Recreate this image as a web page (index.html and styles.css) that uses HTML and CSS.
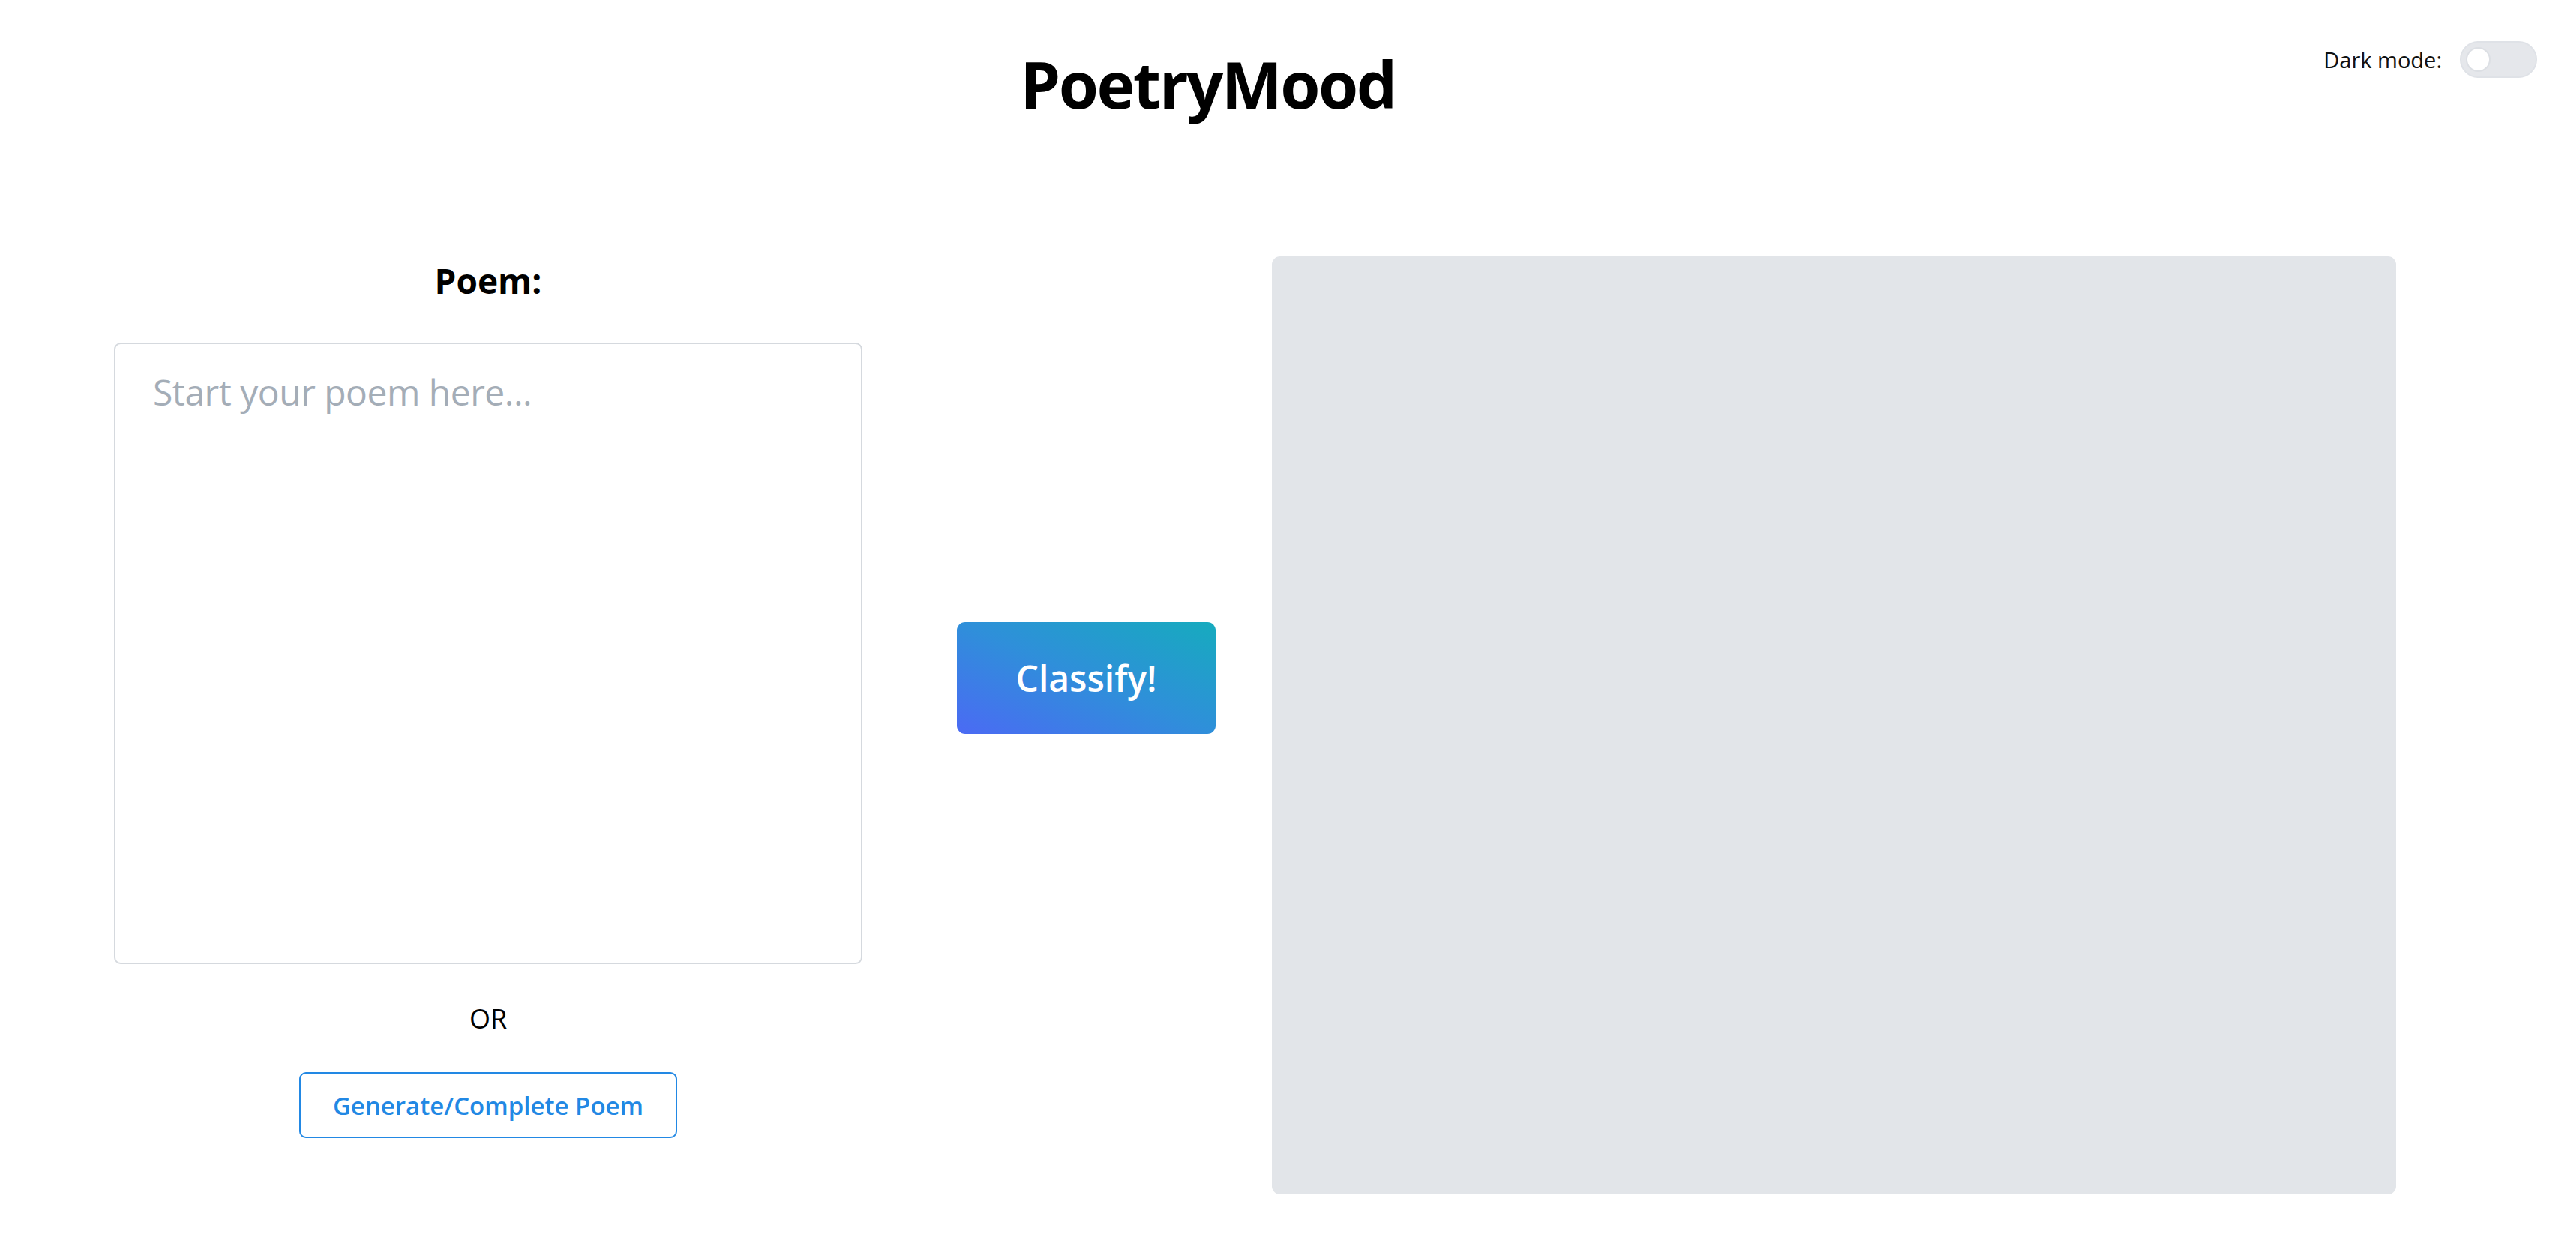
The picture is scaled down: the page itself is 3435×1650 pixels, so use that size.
FILE: index.html
```html
<!DOCTYPE html>
<html lang="en">
<head>
<meta charset="utf-8">
<title>PoetryMood</title>
<link rel="stylesheet" href="styles.css">
</head>
<body>
<header class="top">
  <h1 class="title">PoetryMood</h1>
  <div class="mode">
    <span class="mode-label">Dark mode:</span>
    <span class="switch"><span class="knob"></span></span>
  </div>
</header>
<main class="main">
  <section class="left">
    <label class="poem-label" for="poem">Poem:</label>
    <textarea id="poem" class="poem" placeholder="Start your poem here..."></textarea>
    <div class="or">OR</div>
    <button class="gen">Generate/Complete Poem</button>
  </section>
  <div class="middle">
    <button class="classify">Classify!</button>
  </div>
  <section class="result"></section>
</main>
</body>
</html>
```
FILE: styles.css
```css
* { box-sizing: border-box; }
html, body { margin: 0; padding: 0; background: #ffffff; }
body {
  font-family: "Open Sans", "Noto Sans", sans-serif;
  color: #000;
  width: 3435px;
  height: 1650px;
  overflow: hidden;
  position: relative;
}
.top {
  padding-top: 60px;
}
.title {
  margin: 0;
  padding-right: 214px;
  text-align: center;
  font-size: 86px;
  line-height: 103px;
  font-weight: 700;
  letter-spacing: -2.5px;
}
.mode {
  position: absolute;
  top: 55px;
  right: 52px;
  display: flex;
  align-items: center;
  gap: 24px;
}
.mode-label {
  font-size: 29px;
  color: #111;
}
.switch {
  display: flex;
  align-items: center;
  width: 103px;
  height: 49px;
  border-radius: 25px;
  background: #e5e7eb;
  border: 2px solid #dfe2e7;
  padding-left: 6px;
}
.knob {
  width: 33px;
  height: 33px;
  border-radius: 50%;
  background: #fff;
  border: 2px solid #dcdfe4;
}
.main {
  margin-top: 179px;
  display: flex;
  align-items: flex-start;
  padding-left: 152px;
}
.left {
  width: 998px;
  padding-top: 5px;
  display: flex;
  flex-direction: column;
  align-items: center;
}
.poem-label {
  font-size: 46px;
  line-height: 55px;
  font-weight: 700;
}
.poem {
  margin-top: 55px;
  width: 998px;
  height: 829px;
  border: 2px solid #d5d9de;
  border-radius: 9px;
  padding: 28px 50px;
  font-family: inherit;
  font-size: 48px;
  letter-spacing: -0.5px;
  line-height: 1.5;
  resize: none;
  outline: none;
}
.poem::placeholder { color: #a4adb7; }
.or {
  margin-top: 46px;
  font-size: 36px;
  line-height: 54px;
}
.gen {
  margin-top: 44px;
  width: 504px;
  height: 88px;
  background: #fff;
  border: 2px solid #2288e4;
  border-radius: 9px;
  color: #2288e4;
  font-family: inherit;
  font-size: 33px;
  font-weight: 600;
}
.middle {
  margin-left: 126px;
  padding-top: 488px;
}
.classify {
  width: 345px;
  height: 149px;
  border: 0;
  border-radius: 11px;
  background: linear-gradient(to top right, #4b6af4, #2f8fda 50%, #16abbe);
  color: #fff;
  font-family: inherit;
  font-size: 48px;
  font-weight: 600;
}
.result {
  margin-left: 75px;
  width: 1499px;
  height: 1251px;
  background: #e2e5e9;
  border-radius: 11px;
}
```
